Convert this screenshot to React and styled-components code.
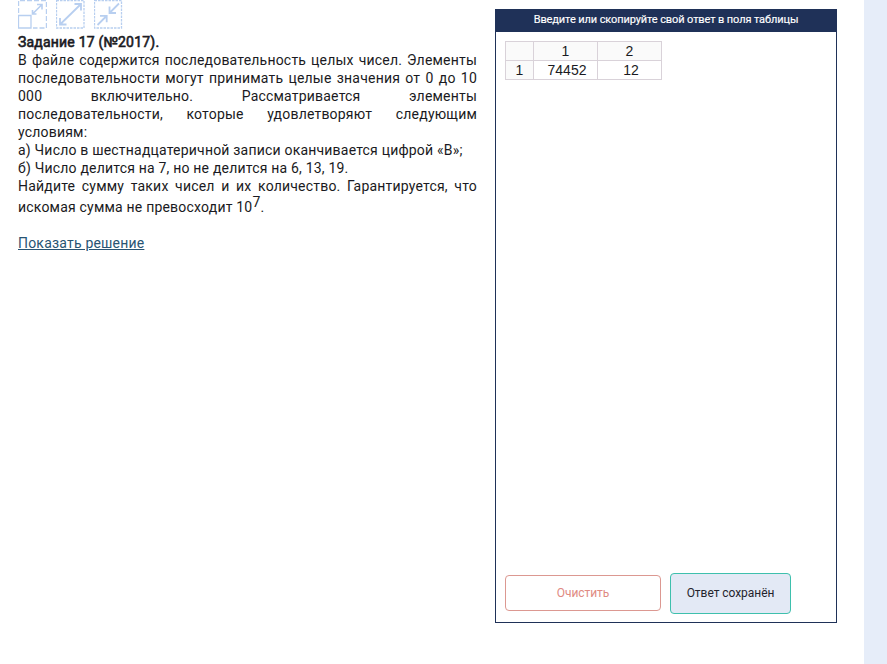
import React from "react";
import styled, { createGlobalStyle } from "styled-components";

const Global = createGlobalStyle`
  * { box-sizing: border-box; }
  body { margin: 0; background: #fff; overflow: hidden; }
`;

const Page = styled.div`
  display: flex;
  height: 664px;
  width: 887px;
  padding-left: 18px;
  font-family: Roboto, "Liberation Sans", sans-serif;
  color: #1a1a22;
`;

const Task = styled.section`
  width: 459px;
  font-size: 14px;
  line-height: 18px;
  letter-spacing: 0.2px;
`;

const Tools = styled.div`
  display: flex;
  gap: 9px;
  height: 33px;
`;

const ToolIcon = styled.svg`
  display: block;
  width: 29px;
  height: 29px;
  fill: none;
  stroke: #b8cff0;
`;

const Title = styled.h1`
  margin: 0;
  height: 18px;
  font-size: 14px;
  line-height: 18px;
  font-weight: 400;
  letter-spacing: 0.2px;
  -webkit-text-stroke: 0.6px currentColor;
  white-space: nowrap;
`;

const Line = styled.p`
  margin: 0;
  height: ${(p) => p.$height || 18}px;
  line-height: 18px;
  white-space: ${(p) => (p.$justify ? "normal" : "nowrap")};
  text-align: ${(p) => (p.$justify ? "justify" : "left")};
  text-align-last: ${(p) => (p.$justify ? "justify" : "left")};
`;

const Sup = styled.sup`
  font-size: 14px;
  line-height: 14px;
  vertical-align: 5px;
`;

const SolutionLink = styled.a`
  display: inline-block;
  margin-top: 18px;
  color: #285473;
  text-decoration: underline;
`;

const Answer = styled.section`
  display: flex;
  flex-direction: column;
  width: 342px;
  height: 614px;
  margin: 9px 27px 0 18px;
  border: 1px solid #1f3158;
`;

const AnswerTitle = styled.header`
  height: 22px;
  background: #1f3158;
  color: #fff;
  font-size: 11px;
  font-weight: 400;
  letter-spacing: -0.1px;
  -webkit-text-stroke: 0.15px currentColor;
  line-height: 19px;
  text-align: center;
  white-space: nowrap;
`;

const Table = styled.table`
  width: 157px;
  margin: 9px 0 0 9px;
  border-collapse: collapse;
  table-layout: fixed;
  font-family: "Liberation Sans", sans-serif;
  font-size: 14px;
  line-height: 18px;
  text-align: center;
`;

const Cell = styled.td`
  width: ${(p) => p.$width}px;
  height: 19px;
  padding: ${(p) => (p.$value ? "0 0 0 3px" : "0")};
  border: 1px solid #d9d2d9;
  background: ${(p) => (p.$value ? "#fff" : "#fafafa")};
`;

const Actions = styled.footer`
  display: flex;
  align-items: flex-start;
  gap: 9px;
  margin: auto 0 8px 9px;
`;

const Button = styled.button`
  width: ${(p) => (p.$saved ? 121 : 156)}px;
  height: ${(p) => (p.$saved ? 41 : 36)}px;
  margin: ${(p) => (p.$saved ? 0 : "2px 0 0")};
  padding: ${(p) => (p.$saved ? "0 0 2px" : 0)};
  border: 1px solid ${(p) => (p.$saved ? "#3ec0ad" : "#dc9891")};
  border-radius: 4px;
  background: ${(p) => (p.$saved ? "#e3e9f5" : "#fff")};
  color: ${(p) => (p.$saved ? "#24242c" : "#e08a82")};
  font-family: Roboto, sans-serif;
  font-size: 12px;
  letter-spacing: -0.05px;
  white-space: nowrap;
`;

const SideStrip = styled.aside`
  width: 23px;
  background: #e6edf9;
`;

export default function App() {
  return (
    <>
      <Global />
      <Page>
        <Task>
          <Tools>
            <ToolIcon viewBox="0 0 29 29">
              <path d="M0.5 13V0.5H28.5V28H15" strokeWidth="1.4" strokeDasharray="5 2" />
              <path d="M0.5 15.5H13V28H0.5Z" strokeWidth="1.3" />
              <path d="M14.5 14L23.5 5M19 4.5H24V9.5M14.5 10V14H18.5" strokeWidth="1.6" />
            </ToolIcon>
            <ToolIcon viewBox="0 0 29 29">
              <path d="M0.5 0.5H28V28H0.5Z" strokeWidth="1.3" strokeDasharray="2.5 1" />
              <path d="M4 24.5L25 4M18.5 4H25V10.5M4 18V24.5H10.5" strokeWidth="1.8" />
            </ToolIcon>
            <ToolIcon viewBox="0 0 29 29">
              <path d="M0.5 0.5H27.5V28H0.5Z" strokeWidth="1.3" strokeDasharray="2.5 1" />
              <path d="M25 3.5L16 12.5M15.5 6.5V13H22M3.5 25L12.5 16M6 15.8H12.7V22.3" strokeWidth="1.8" />
            </ToolIcon>
          </Tools>
          <Title>Задание 17 (№2017).</Title>
          <Line $justify>В файле содержится последовательность целых чисел. Элементы</Line>
          <Line $justify>последовательности могут принимать целые значения от 0 до 10</Line>
          <Line $justify>000 включительно. Рассматривается элементы</Line>
          <Line $justify>последовательности, которые удовлетворяют следующим</Line>
          <Line>условиям:</Line>
          <Line>а) Число в шестнадцатеричной записи оканчивается цифрой «B»;</Line>
          <Line>б) Число делится на 7, но не делится на 6, 13, 19.</Line>
          <Line $justify>Найдите сумму таких чисел и их количество. Гарантируется, что</Line>
          <Line $height={21}>
            искомая сумма не превосходит 10<Sup>7</Sup>.
          </Line>
          <SolutionLink href="#">Показать решение</SolutionLink>
        </Task>
        <Answer>
          <AnswerTitle>Введите или скопируйте свой ответ в поля таблицы</AnswerTitle>
          <Table>
            <tbody>
              <tr>
                <Cell $width={28} />
                <Cell $width={64}>1</Cell>
                <Cell $width={64}>2</Cell>
              </tr>
              <tr>
                <Cell>1</Cell>
                <Cell $value>74452</Cell>
                <Cell $value>12</Cell>
              </tr>
            </tbody>
          </Table>
          <Actions>
            <Button>Очистить</Button>
            <Button $saved>Ответ сохранён</Button>
          </Actions>
        </Answer>
        <SideStrip />
      </Page>
    </>
  );
}
